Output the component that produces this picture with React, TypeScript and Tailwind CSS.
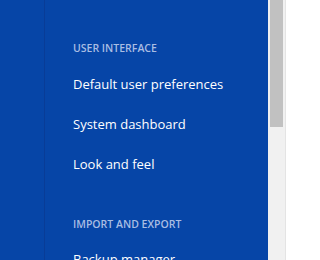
import React from "react";

export default function App() {
  const font = { fontFamily: '"Segoe UI", "Open Sans", "Noto Sans", sans-serif' };
  return (
    <div className="flex h-[260px] w-[300px] overflow-hidden bg-white" style={font}>
      <div className="w-[44px] shrink-0 bg-[#0645a7]" />
      <div className="w-px shrink-0 bg-[#083c97]" />
      <div className="w-[223px] shrink-0 bg-[#0645a7] pl-[28px] pt-[41px]">
        <div className="text-[10.5px] font-semibold leading-[14px] text-[#a9bde3]">USER INTERFACE</div>
        <div className="mt-[20px] flex flex-col gap-[21px] text-[13px] leading-[19px] text-white">
          <div>Default user preferences</div>
          <div>System dashboard</div>
          <div>Look and feel</div>
        </div>
        <div className="mt-[43px] text-[10.5px] font-semibold leading-[14px] text-[#a9bde3]">IMPORT AND EXPORT</div>
        <div className="mt-[19px] text-[13px] leading-[19px] text-white">Backup manager</div>
      </div>
      <div className="w-[17px] shrink-0 bg-[#f1f1f1] px-[2px]">
        <div className="h-[127px] w-full bg-[#c1c1c1]" />
      </div>
      <div className="w-px shrink-0 bg-[#e4e4e4]" />
      <div className="flex-1 bg-white" />
    </div>
  );
}
